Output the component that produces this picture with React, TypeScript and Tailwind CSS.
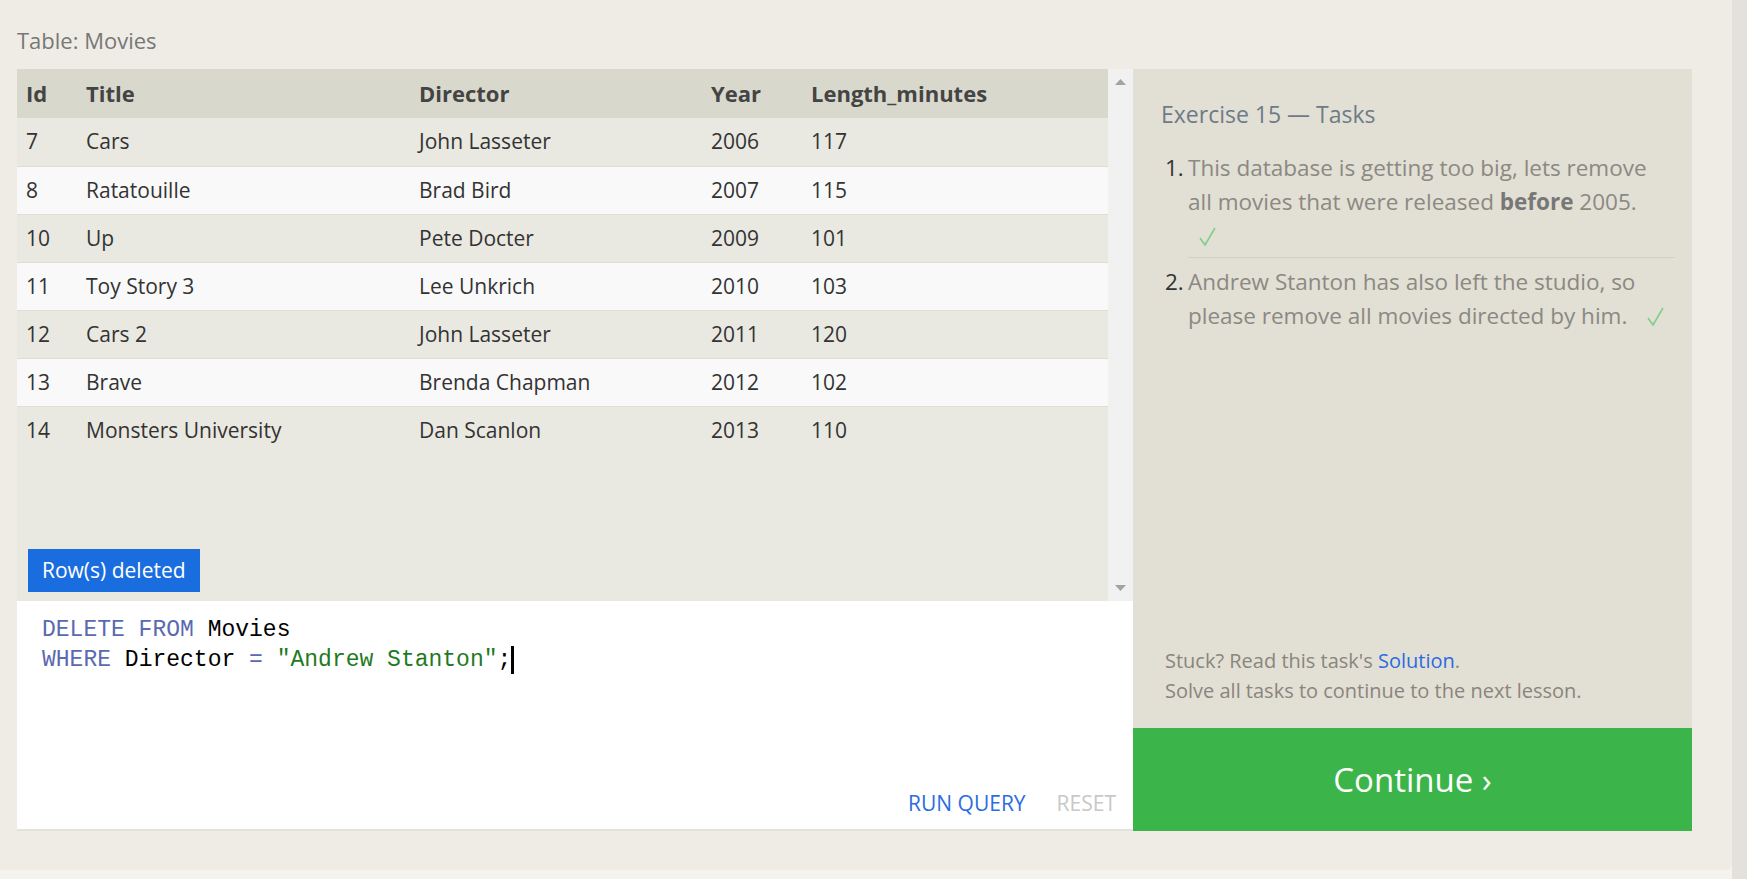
import React from "react";

const rows = [
  { id: 7, title: "Cars", director: "John Lasseter", year: 2006, len: 117 },
  { id: 8, title: "Ratatouille", director: "Brad Bird", year: 2007, len: 115 },
  { id: 10, title: "Up", director: "Pete Docter", year: 2009, len: 101 },
  { id: 11, title: "Toy Story 3", director: "Lee Unkrich", year: 2010, len: 103 },
  { id: 12, title: "Cars 2", director: "John Lasseter", year: 2011, len: 120 },
  { id: 13, title: "Brave", director: "Brenda Chapman", year: 2012, len: 102 },
  { id: 14, title: "Monsters University", director: "Dan Scanlon", year: 2013, len: 110 },
];

function Check({ className = "" }: { className?: string }) {
  return (
    <svg
      className={`inline-block align-[-2px] ${className}`}
      width="17"
      height="19"
      viewBox="0 0 17 19">
      <path d="M1 11 L6 18 L16 1" fill="none" stroke="#7fcf8b" strokeWidth="1.6" />
    </svg>
  );
}

function MoviesTable() {
  return (
    <div className="flex flex-col">
      <div className="flex h-[49px] items-center bg-[#d9d8cc] font-bold text-[#444] text-[22px]">
        <div className="w-[60px] pl-[9px]">Id</div>
        <div className="w-[333px] pl-[9px]">Title</div>
        <div className="w-[292px] pl-[9px]">Director</div>
        <div className="w-[100px] pl-[9px]">Year</div>
        <div className="flex-1 pl-[9px]">Length_minutes</div>
      </div>
      {rows.map((r, i) => (
        <div
          key={r.id}
          className={`flex h-[48px] items-center text-[21px] text-[#333] ${
            i > 0 ? "border-t border-[#deddd6]" : ""
          } ${i % 2 === 1 ? "bg-[#f9f9f9]" : "bg-[#e9e8e1]"}`}>
          <div className="w-[60px] pl-[9px]">{r.id}</div>
          <div className="w-[333px] pl-[9px]">{r.title}</div>
          <div className="w-[292px] pl-[9px]">{r.director}</div>
          <div className="w-[100px] pl-[9px]">{r.year}</div>
          <div className="flex-1 pl-[9px]">{r.len}</div>
        </div>
      ))}
    </div>
  );
}

export default function App() {
  return (
    <div
      className="flex h-[879px] w-full bg-[#f4f3ee]"
      style={{ fontFamily: '"Open Sans", "Noto Sans", sans-serif' }}>
      <div className="w-[1732px] h-[870px] bg-[#efece5] rounded-br-[6px] pl-[17px] pt-[25px]">
        <div className="h-[30px] leading-[30px] text-[22px] text-[#777] mb-[14px]">
          Table: Movies
        </div>

        <div className="flex w-[1675px]">
          {/* left column: results + editor */}
          <div className="w-[1116px] flex flex-col">
            <div className="flex h-[532px]">
              <div className="flex-1 flex flex-col bg-[#e9e8e1]">
                <MoviesTable />
                <div className="mt-auto ml-[11px] mb-[9px] self-start h-[43px] px-[14px] flex items-center bg-[#1a6ddf] text-white text-[21px]">
                  Row(s) deleted
                </div>
              </div>
              <div className="w-[25px] bg-[#f1f1f1] flex flex-col items-center justify-between py-[10px]">
                <svg width="11" height="6" viewBox="0 0 11 6">
                  <path d="M0 6 L5.5 0 L11 6 Z" fill="#a3a3a3" />
                </svg>
                <svg width="11" height="6" viewBox="0 0 11 6">
                  <path d="M0 0 L5.5 6 L11 0 Z" fill="#a3a3a3" />
                </svg>
              </div>
            </div>

            <div className="h-[230px] bg-white border-b-2 border-[#e3e1da] flex flex-col">
              <div
                className="pt-[14px] pl-[25px] text-[23px] leading-[30px]"
                style={{ fontFamily: '"Liberation Mono", "DejaVu Sans Mono", monospace' }}>
                <div>
                  <span className="text-[#5a6ab0]">DELETE FROM</span>{" "}
                  <span className="text-black">Movies</span>
                </div>
                <div className="flex items-center">
                  <span className="whitespace-pre">
                    <span className="text-[#5a6ab0]">WHERE</span>{" "}
                    <span className="text-black">Director</span>{" "}
                    <span className="text-[#5a6ab0]">=</span>{" "}
                    <span className="text-[#1f7a1f]">"Andrew Stanton"</span>
                    <span className="text-black">;</span>
                  </span>
                  <span className="inline-block w-[3px] h-[28px] bg-black" />
                </div>
              </div>
              <div className="mt-auto flex justify-end gap-[31px] pr-[17px] pb-[12px] text-[21px] leading-[28px]">
                <span className="text-[#2b6de0]">RUN QUERY</span>
                <span className="text-[#c8c8c8]">RESET</span>
              </div>
            </div>
          </div>

          {/* right column: tasks */}
          <div className="w-[559px] flex flex-col">
            <div className="flex-1 bg-[#e2dfd4] flex flex-col pl-[28px] pr-[17px] pt-[30px] pb-[22px]">
              <div className="text-[23px] leading-[30px] text-[#6d7b88]">
                Exercise 15 — Tasks
              </div>
              <div className="ml-[4px] mt-[22px] text-[22.5px] leading-[34px] text-[#8b8983]">
                <div className="flex">
                  <span className="w-[23px] shrink-0 text-[#333]">1.</span>
                  <div className="flex-1 pb-[4px] border-b border-[#d3d0c5]">
                    <div>
                      This database is getting too big, lets remove all movies that were released{" "}
                      <b className="text-[#777]">before</b> 2005.
                    </div>
                    <div className="pl-[11px]">
                      <Check />
                    </div>
                  </div>
                </div>
                <div className="flex pt-[7px]">
                  <span className="w-[23px] shrink-0 text-[#333]">2.</span>
                  <div className="flex-1">
                    Andrew Stanton has also left the studio, so please remove all movies directed by him.{" "}
                    <Check className="ml-[14px]" />
                  </div>
                </div>
              </div>
              <div className="mt-auto ml-[4px] text-[20px] leading-[30px] text-[#8a857e]">
                <div>
                  Stuck? Read this task's <span className="text-[#2c6be0]">Solution</span>.
                </div>
                <div>Solve all tasks to continue to the next lesson.</div>
              </div>
            </div>
            <div className="h-[103px] bg-[#3bb54a] flex items-center justify-center text-white text-[33px]">
              Continue ›
            </div>
          </div>
        </div>
      </div>
      <div className="w-[15px] bg-[#e4e0dc]" />
    </div>
  );
}
